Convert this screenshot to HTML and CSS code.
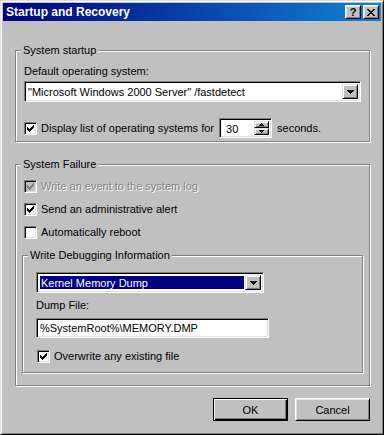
FILE: index.html
```html
<!DOCTYPE html>
<html>
<head>
<meta charset="utf-8">
<link rel="stylesheet" href="styles.css">
</head>
<body>
<div class="window">
  <div class="titlebar">
    <span class="title">Startup and Recovery</span>
    <div class="tb-buttons">
      <span class="tb-btn help">?</span>
      <span class="tb-btn"><svg width="8" height="7" viewBox="0 0 8 7" shape-rendering="crispEdges"><path d="M0 0h2v1h-2zM6 0h2v1h-2zM1 1h2v1h-2zM5 1h2v1h-2zM2 2h4v1h-4zM3 3h2v1h-2zM2 4h4v1h-4zM1 5h2v1h-2zM5 5h2v1h-2zM0 6h2v1h-2zM6 6h2v1h-2z" fill="#000"/></svg></span>
    </div>
  </div>
  <div class="content">
    <fieldset class="group startup">
      <legend>System startup</legend>
      <div class="label">Default operating system:</div>
      <div class="combo os-combo">
        <span class="combo-text">"Microsoft Windows 2000 Server" /fastdetect</span>
        <span class="drop-btn"><svg width="7" height="4" viewBox="0 0 7 4" shape-rendering="crispEdges"><path d="M0 0h7v1h-7zM1 1h5v1h-5zM2 2h3v1h-3zM3 3h1v1h-1z" fill="#000"/></svg></span>
      </div>
      <div class="check-row display-row">
        <span class="checkbox"><svg width="7" height="7" viewBox="0 0 7 7" shape-rendering="crispEdges"><path d="M6 0h1v1h-1zM5 1h2v1h-2zM0 2h1v1h-1zM4 2h3v1h-3zM0 3h2v1h-2zM3 3h3v1h-3zM0 4h5v1h-5zM1 5h3v1h-3zM2 6h1v1h-1z" fill="#000"/></svg></span>
        <span class="check-label">Display list of operating systems for</span>
        <div class="spin">
          <span class="spin-text">30</span>
          <div class="spin-btns">
            <span class="spin-btn"><svg width="5" height="3" viewBox="0 0 5 3" shape-rendering="crispEdges"><path d="M2 0h1v1h-1zM1 1h3v1h-3zM0 2h5v1h-5z" fill="#000"/></svg></span>
            <span class="spin-btn"><svg width="5" height="3" viewBox="0 0 5 3" shape-rendering="crispEdges"><path d="M0 0h5v1h-5zM1 1h3v1h-3zM2 2h1v1h-1z" fill="#000"/></svg></span>
          </div>
        </div>
        <span class="after-spin">seconds.</span>
      </div>
    </fieldset>

    <fieldset class="group failure">
      <legend>System Failure</legend>
      <div class="check-row disabled">
        <span class="checkbox"><svg width="7" height="7" viewBox="0 0 7 7" shape-rendering="crispEdges"><path d="M6 0h1v1h-1zM5 1h2v1h-2zM0 2h1v1h-1zM4 2h3v1h-3zM0 3h2v1h-2zM3 3h3v1h-3zM0 4h5v1h-5zM1 5h3v1h-3zM2 6h1v1h-1z" fill="#808080"/></svg></span>
        <span class="check-label">Write an event to the system log</span>
      </div>
      <div class="check-row">
        <span class="checkbox"><svg width="7" height="7" viewBox="0 0 7 7" shape-rendering="crispEdges"><path d="M6 0h1v1h-1zM5 1h2v1h-2zM0 2h1v1h-1zM4 2h3v1h-3zM0 3h2v1h-2zM3 3h3v1h-3zM0 4h5v1h-5zM1 5h3v1h-3zM2 6h1v1h-1z" fill="#000"/></svg></span>
        <span class="check-label">Send an administrative alert</span>
      </div>
      <div class="check-row">
        <span class="checkbox"></span>
        <span class="check-label">Automatically reboot</span>
      </div>

      <fieldset class="group debug">
        <legend>Write Debugging Information</legend>
        <div class="combo dump-combo">
          <span class="combo-text selected">Kernel Memory Dump</span>
          <span class="drop-btn"><svg width="7" height="4" viewBox="0 0 7 4" shape-rendering="crispEdges"><path d="M0 0h7v1h-7zM1 1h5v1h-5zM2 2h3v1h-3zM3 3h1v1h-1z" fill="#000"/></svg></span>
        </div>
        <div class="label dump-label">Dump File:</div>
        <div class="textbox">%SystemRoot%\MEMORY.DMP</div>
        <div class="check-row overwrite">
          <span class="checkbox"><svg width="7" height="7" viewBox="0 0 7 7" shape-rendering="crispEdges"><path d="M6 0h1v1h-1zM5 1h2v1h-2zM0 2h1v1h-1zM4 2h3v1h-3zM0 3h2v1h-2zM3 3h3v1h-3zM0 4h5v1h-5zM1 5h3v1h-3zM2 6h1v1h-1z" fill="#000"/></svg></span>
          <span class="check-label">Overwrite any existing file</span>
        </div>
      </fieldset>
    </fieldset>

    <div class="buttons">
      <button class="btn default">OK</button>
      <button class="btn">Cancel</button>
    </div>
  </div>
</div>
</body>
</html>
```

FILE: styles.css
```css
html, body {
  margin: 0;
  padding: 0;
  background: #c0c0c0;
}

.window {
  width: 384px;
  height: 435px;
  box-sizing: border-box;
  background: #c0c0c0;
  border: 1px solid;
  border-color: #dfdfdf #000 #000 #dfdfdf;
  box-shadow: inset 1px 1px #fff, inset -1px -1px #808080;
  padding: 2px;
  font-family: "Liberation Sans", Arial, sans-serif;
  font-size: 11px;
  line-height: 13px;
  color: #000;
}

.titlebar {
  height: 18px;
  display: flex;
  align-items: center;
  justify-content: space-between;
  background: linear-gradient(90deg, #000080, #1084d0);
  padding: 0 2px 0 3px;
}

.title {
  color: #fff;
  font-weight: bold;
  font-size: 12px;
  line-height: 18px;
}

.tb-buttons {
  display: flex;
  gap: 2px;
}

.tb-btn {
  width: 16px;
  height: 14px;
  box-sizing: border-box;
  background: #c0c0c0;
  border: 1px solid;
  border-color: #fff #000 #000 #fff;
  box-shadow: inset 1px 1px #dfdfdf, inset -1px -1px #808080;
  display: flex;
  align-items: center;
  justify-content: center;
}

.tb-btn.help {
  font-weight: bold;
  font-size: 11px;
  line-height: 12px;
}

.content {
  padding: 23px 11px 0 12px;
}

.group {
  margin: 0;
  border: 1px solid #808080;
  box-shadow: inset 1px 1px #fff, 1px 1px #fff;
  min-width: 0;
}

.group legend {
  padding: 0 2px;
  margin-left: -3px;
  background: #c0c0c0;
  line-height: 13px;
}

.failure > legend {
  margin-left: -1px;
}

.debug > legend {
  margin-left: -8px;
}

.startup {
  padding: 8px 8px 3px 8px;
}

.label {
  height: 13px;
}

.combo {
  height: 21px;
  box-sizing: border-box;
  background: #fff;
  border: 1px solid;
  border-color: #808080 #fff #fff #808080;
  box-shadow: inset 1px 1px #000, inset -1px -1px #dfdfdf;
  padding: 2px;
  display: flex;
  align-items: stretch;
}

.os-combo {
  margin-top: 3px;
}

.combo-text {
  flex: 1;
  padding-left: 1px;
  line-height: 17px;
  white-space: nowrap;
  overflow: hidden;
}

.combo-text.selected {
  background: #000080;
  color: #fff;
  margin: 1px;
  line-height: 15px;
}

.drop-btn {
  width: 16px;
  box-sizing: border-box;
  background: #c0c0c0;
  border: 1px solid;
  border-color: #dfdfdf #000 #000 #dfdfdf;
  box-shadow: inset 1px 1px #fff, inset -1px -1px #808080;
  display: flex;
  align-items: center;
  justify-content: center;
}

.check-row {
  display: flex;
  align-items: center;
  height: 13px;
}

.checkbox {
  width: 13px;
  height: 13px;
  box-sizing: border-box;
  flex: none;
  background: #fff;
  border: 1px solid;
  border-color: #808080 #fff #fff #808080;
  box-shadow: inset 1px 1px #000, inset -1px -1px #dfdfdf;
  display: flex;
  align-items: center;
  justify-content: center;
}

.check-label {
  margin-left: 4px;
  white-space: nowrap;
}

.display-row {
  height: 20px;
  margin-top: 16px;
}

.spin {
  margin-left: 5px;
  width: 53px;
  height: 20px;
  box-sizing: border-box;
  background: #fff;
  border: 1px solid;
  border-color: #808080 #fff #fff #808080;
  box-shadow: inset 1px 1px #000, inset -1px -1px #dfdfdf;
  padding: 2px;
  display: flex;
}

.spin-text {
  flex: 1;
  padding-left: 4px;
  line-height: 16px;
}

.spin-btns {
  width: 15px;
  display: flex;
  flex-direction: column;
}

.spin-btn {
  flex: 1;
  box-sizing: border-box;
  background: #c0c0c0;
  border: 1px solid;
  border-color: #dfdfdf #000 #000 #dfdfdf;
  box-shadow: inset 1px 1px #fff, inset -1px -1px #808080;
  display: flex;
  align-items: center;
  justify-content: center;
}

.after-spin {
  margin-left: 5px;
}

.failure {
  margin-top: 16px;
  padding: 9px 6px 12px 6px;
}

.failure > .check-row {
  margin-left: 2px;
  margin-bottom: 10px;
}

.disabled .checkbox {
  background: #c0c0c0;
}

.disabled .check-label {
  color: #808080;
  text-shadow: 1px 1px 0 #fff;
}

.debug {
  padding: 10px 13px 9px 13px;
}

.dump-combo {
  width: 228px;
}

.dump-label {
  margin-top: 6px;
}

.textbox {
  margin-top: 6px;
  width: 233px;
  height: 20px;
  box-sizing: border-box;
  background: #fff;
  border: 1px solid;
  border-color: #808080 #fff #fff #808080;
  box-shadow: inset 1px 1px #000, inset -1px -1px #dfdfdf;
  padding: 0 3px;
  line-height: 18px;
  white-space: nowrap;
}

.overwrite {
  margin-top: 12px;
  margin-left: 1px;
}

.buttons {
  display: flex;
  justify-content: flex-end;
  gap: 7px;
  margin-top: 12px;
}

.btn {
  width: 75px;
  height: 23px;
  box-sizing: border-box;
  background: #c0c0c0;
  font-family: "Liberation Sans", Arial, sans-serif;
  font-size: 11px;
  color: #000;
  padding: 0;
  border: 1px solid;
  border-color: #fff #000 #000 #fff;
  box-shadow: inset 1px 1px #dfdfdf, inset -1px -1px #808080;
}

.btn.default {
  border-color: #000;
  box-shadow: inset 1px 1px #fff, inset -1px -1px #000, inset -2px -2px #808080;
}
```
